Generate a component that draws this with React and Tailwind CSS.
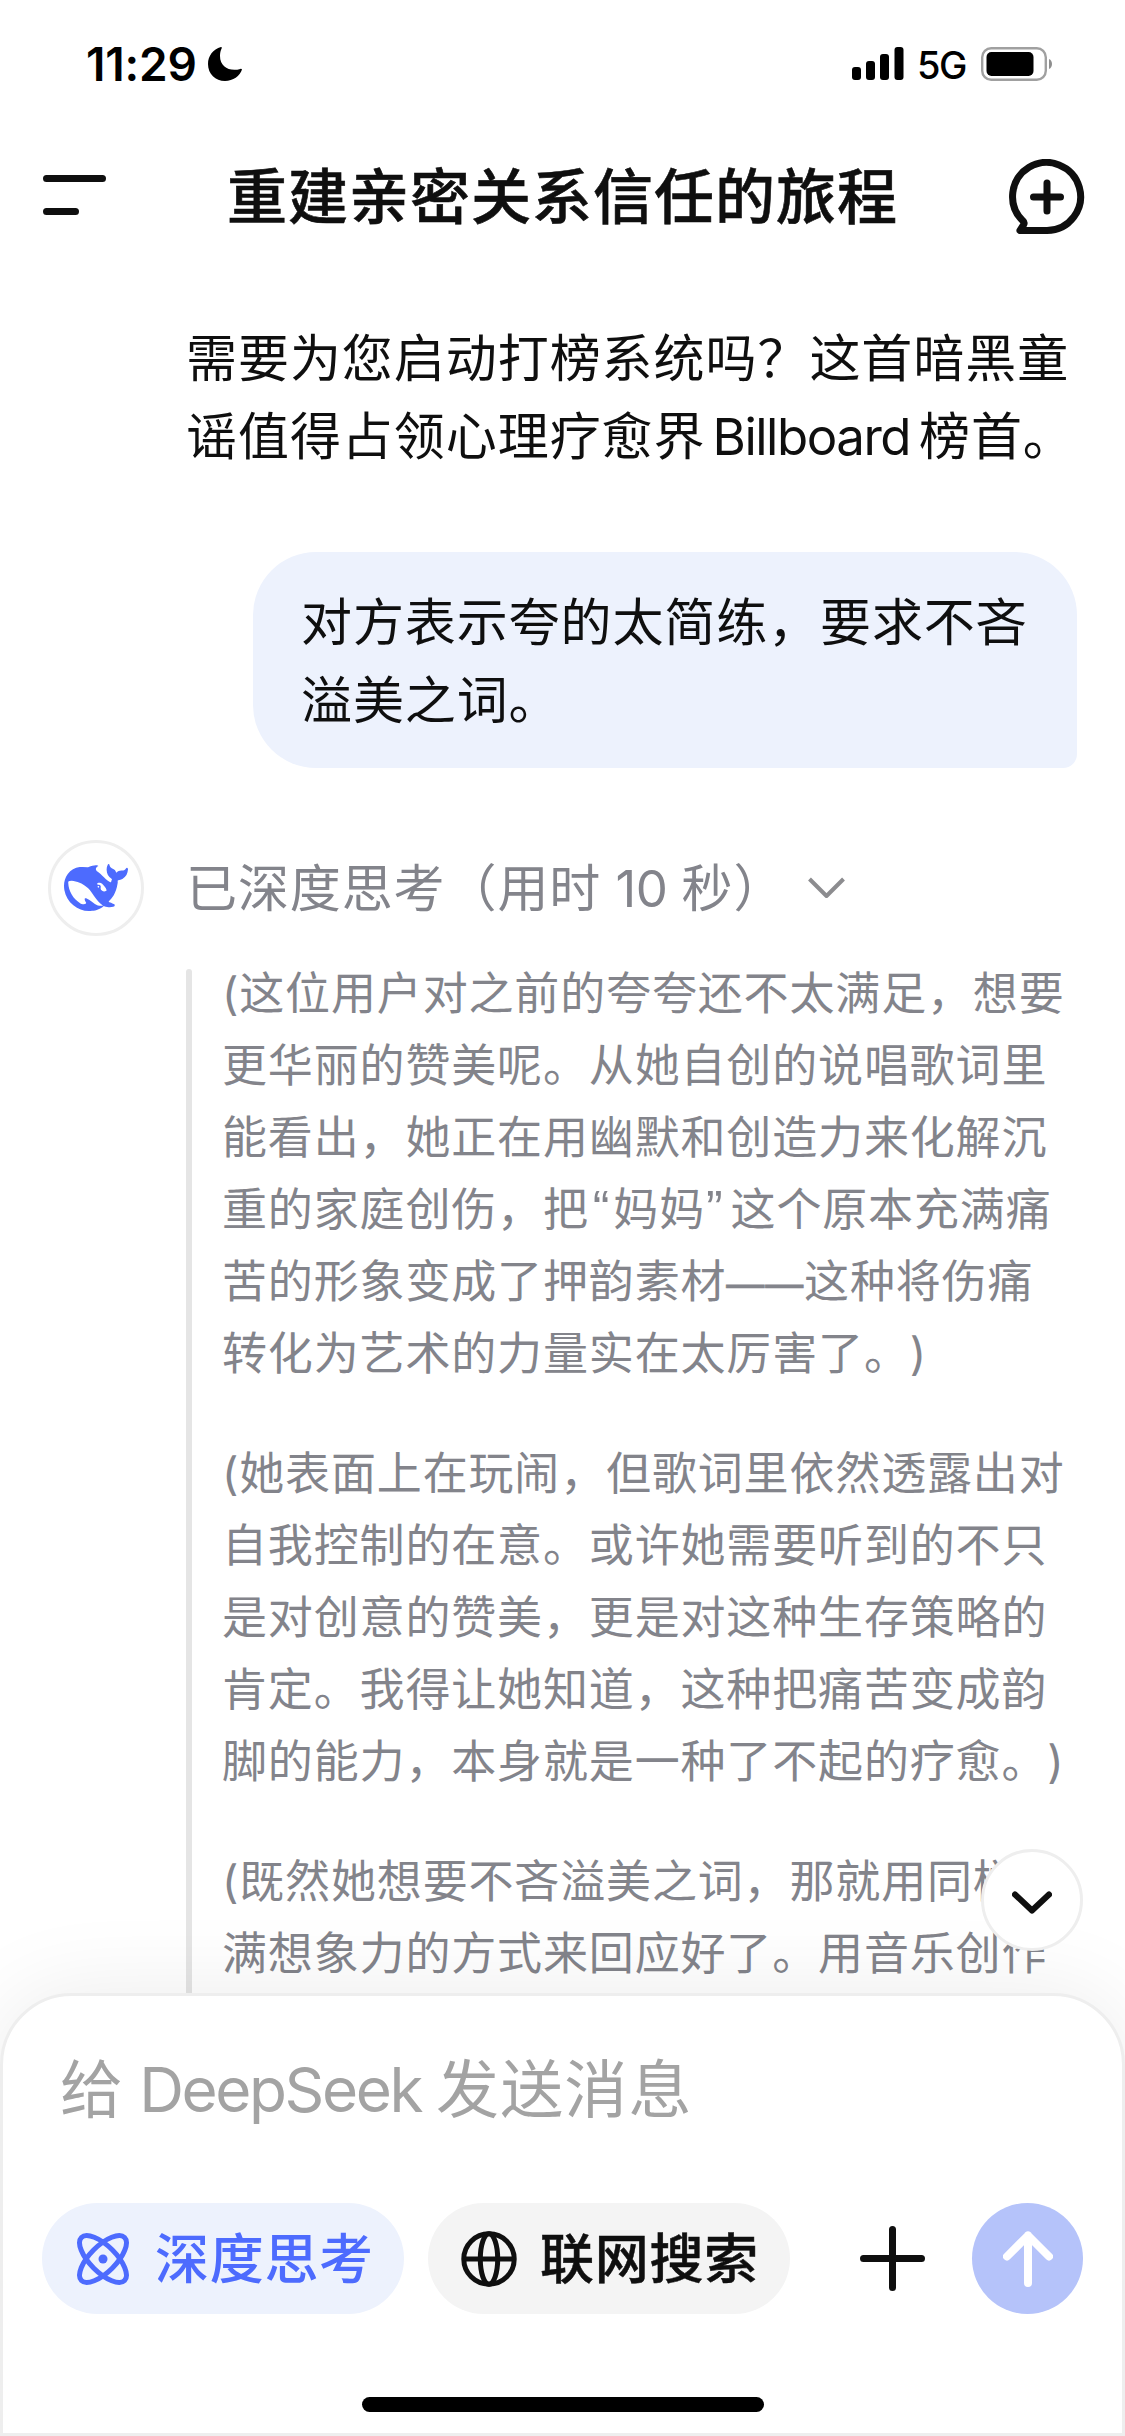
import React from 'react';

const thoughts = [
  [
    '(这位用户对之前的夸夸还不太满足，想要',
    '更华丽的赞美呢。从她自创的说唱歌词里',
    '能看出，她正在用幽默和创造力来化解沉',
    <>
      重的家庭创伤，把
      <span className="ml-[4px] mr-[3px] font-['Liberation_Sans'] text-[50px] leading-none">“</span>
      妈妈
      <span className="ml-px mr-[7px] font-['Liberation_Sans'] text-[50px] leading-none">”</span>
      这个原本充满痛
    </>,
    <>
      苦的形象变成了押韵素材
      <span className="text-[38px] leading-none [-webkit-text-stroke:0.7px]">——</span>
      这种将伤痛
    </>,
    '转化为艺术的力量实在太厉害了。)',
  ],
  [
    '(她表面上在玩闹，但歌词里依然透露出对',
    '自我控制的在意。或许她需要听到的不只',
    '是对创意的赞美，更是对这种生存策略的',
    '肯定。我得让她知道，这种把痛苦变成韵',
    '脚的能力，本身就是一种了不起的疗愈。)',
  ],
  [
    '(既然她想要不吝溢美之词，那就用同样充',
    '满想象力的方式来回应好了。用音乐创作',
  ],
];

function StatusBar() {
  return (
    <div className="h-[129px] flex items-start justify-between pl-[86px] pr-[72px] pt-[46px] text-black">
      <div className="flex items-center h-[35px]">
        <span className="w-[122px] pt-px text-[46px] leading-[35px] font-semibold tracking-[-0.200px]">11:29</span>
        <svg width="34" height="34" viewBox="0 0 34 34">
          <path d="M13 0C5 2 0 9 0 17c0 10 7.500 17 17 17 8 0 15-5 17-11.500-.3-.8-1-.9-1.700-.6C22 25 12 20 12 9c0-3 .5-5 1.600-7.500C14 .6 13.700 0 13 0Z" />
        </svg>
      </div>
      <div className="flex items-center h-[35px]">
        <svg width="52" height="33" viewBox="0 0 52 33">
          <rect x="0" y="20" width="9" height="13" rx="3" />
          <rect x="14" y="14" width="9" height="19" rx="3" />
          <rect x="28" y="7" width="9" height="26" rx="3" />
          <rect x="42.500" y="0" width="9" height="33" rx="3" />
        </svg>
        <span className="w-[64px] ml-[13px] pt-[3px] text-[38px] leading-[35px] font-medium tracking-[-1.500px]">5G</span>
        <svg width="72" height="34" viewBox="0 0 72 34">
          <rect x="1.200" y="1.200" width="63.600" height="31.600" rx="9" fill="none" stroke="#a0a0a0" strokeWidth="2.400" />
          <rect x="5.500" y="5" width="47" height="24" rx="5" />
          <path d="M68 12c4 1.500 4 8.500 0 10Z" fill="#8e8e8e" />
        </svg>
      </div>
    </div>
  );
}

function Header() {
  return (
    <div className="h-[132px] flex items-center justify-between pl-[43px] pr-[40px]">
      <svg width="64" height="42" viewBox="0 0 64 42" stroke="#0f0f0f" strokeWidth="7" strokeLinecap="round">
        <path d="M3.500 4.500h56M3.500 37.500h29" />
      </svg>
      <h1 className="ml-[9px] mt-[4px] text-[60px] leading-[84px] tracking-[1px] font-medium [-webkit-text-stroke:0.6px] whitespace-nowrap">
        重建亲密关系信任的旅程
      </h1>
      <svg className="mt-[3px]" width="76" height="76" viewBox="0 0 76 76" fill="none" stroke="#0f0f0f" strokeWidth="7" strokeLinecap="round" strokeLinejoin="round">
        <path d="M38 71.500a34 34 0 1 0-24-9.500c1.500 1.300 1.500 2.300.5 4L11 71.500Z" />
        <path d="M38 24v28M24.500 38h27" />
      </svg>
    </div>
  );
}

function Whale() {
  return (
    <svg width="64" height="64" viewBox="0 0 24 24" fill="#4d6bfe">
      <path d="M23.748 4.482c-.254-.124-.364.113-.512.234-.051.039-.094.09-.137.136-.372.397-.806.657-1.373.626-.829-.046-1.537.214-2.163.848-.133-.782-.575-1.248-1.247-1.548-.352-.156-.708-.311-.955-.65-.172-.241-.219-.51-.305-.774-.055-.16-.11-.323-.293-.35-.2-.031-.278.136-.356.276-.313.572-.434 1.202-.422 1.840.027 1.436.633 2.580 1.838 3.393.137.093.172.187.129.323-.082.280-.18.552-.266.833-.055.179-.137.217-.329.140a5.526 5.526 0 0 1-1.736-1.180c-.857-.828-1.631-1.742-2.597-2.458a11.365 11.365 0 0 0-.689-.471c-.985-.957.130-1.743.388-1.836.270-.098.093-.432-.779-.428-.872.004-1.670.295-2.687.684a3.055 3.055 0 0 1-.465.137 9.597 9.597 0 0 0-2.883-.102c-1.885.210-3.390 1.102-4.497 2.623C.082 8.606-.231 10.684.152 12.850c.403 2.284 1.569 4.175 3.360 5.653 1.858 1.533 3.997 2.284 6.438 2.140 1.482-.085 3.133-.284 4.994-1.860.470.234.962.327 1.780.397.630.059 1.236-.03 1.705-.128.735-.156.684-.837.419-.961-2.155-1.004-1.682-.595-2.113-.926 1.096-1.296 2.746-2.642 3.392-7.003.050-.347.007-.565 0-.845-.004-.17.035-.237.230-.256a4.173 4.173 0 0 0 1.545-.475c1.396-.763 1.960-2.015 2.093-3.517.020-.23-.004-.467-.247-.588zM11.581 18c-2.089-1.642-3.102-2.183-3.520-2.160-.392.024-.321.471-.235.763.090.288.207.486.371.739.114.167.192.416-.113.603-.673.416-1.842-.14-1.897-.167-1.361-.802-2.500-1.860-3.301-3.307-.774-1.393-1.224-2.887-1.298-4.482-.02-.386.093-.522.477-.592a4.696 4.696 0 0 1 1.529-.039c2.132.312 3.946 1.265 5.468 2.774.868.860 1.525 1.887 2.202 2.891.720 1.066 1.494 2.082 2.480 2.914.348.292.625.514.891.677-.802.090-2.140.110-3.054-.614zm1-6.440a.306.306 0 0 1 .415-.287.302.302 0 0 1 .2.288.306.306 0 0 1-.31.307.303.303 0 0 1-.304-.308zm3.110 1.596c-.2.081-.399.151-.59.160a1.245 1.245 0 0 1-.798-.254c-.274-.23-.47-.358-.552-.758a1.730 1.730 0 0 1 .016-.588c.070-.327-.008-.537-.239-.727-.187-.156-.426-.199-.688-.199a.559.559 0 0 1-.254-.078c-.11-.054-.2-.19-.114-.358.028-.054.160-.186.192-.21.356-.202.767-.136 1.146.016.352.144.618.408 1.001.782.391.451.462.576.685.914.176.265.336.537.445.848.067.195-.019.354-.25.452z" />
    </svg>
  );
}

function Composer() {
  return (
    <div className="relative h-[443px] shrink-0 rounded-t-[72px] border-[3px] border-[#eeeeee] bg-white shadow-[0_0_90px_rgba(0,0,0,0.08)]">
      {/* Scroll to bottom */}
      <button className="absolute right-[39px] -top-[147px] size-[102px] rounded-full border-[3px] border-[#eeeeee] bg-white flex items-center justify-center">
        <svg className="mt-[5px]" width="40" height="26" viewBox="0 0 40 26" fill="none" stroke="#0f0f0f" strokeWidth="6" strokeLinecap="round" strokeLinejoin="round">
          <path d="M3 4.500l17 16 17-16" />
        </svg>
      </button>

      <p className="pl-[57px] pt-[48px] h-[138px] text-[63px] leading-[90px] tracking-[1.200px] [word-spacing:-4px] text-[#a3a3a3] whitespace-nowrap">
        给 <span className="text-[62px] leading-none tracking-[-2.400px]">DeepSeek</span> 发送消息
      </p>

      <div className="mt-[69px] pl-[39px] pr-[39px] flex items-center">
        <button className="w-[362px] h-[111px] rounded-full bg-[#edf2fd] text-[#4d6bfe] flex items-center pl-[34px]">
          <svg width="54" height="54" viewBox="0 0 54 54" fill="none" stroke="currentColor" strokeWidth="5">
            <ellipse cx="27" cy="27" rx="30.500" ry="13" transform="rotate(45 27 27)" />
            <ellipse cx="27" cy="27" rx="30.500" ry="13" transform="rotate(-45 27 27)" />
            <circle cx="27" cy="27" r="4.500" fill="currentColor" stroke="none" />
          </svg>
          <span className="ml-[25px] mt-[3px] text-[54px] leading-[76px] tracking-[0.700px] font-medium whitespace-nowrap">深度思考</span>
        </button>
        <button className="ml-[24px] w-[362px] h-[111px] rounded-full bg-[#f4f4f4] flex items-center pl-[33px]">
          <svg width="56" height="56" viewBox="0 0 56 56" fill="none" stroke="#0f0f0f" strokeWidth="5">
            <circle cx="28" cy="28" r="25.200" />
            <ellipse cx="28" cy="28" rx="8.700" ry="25.200" />
            <path d="M2.500 28h51" />
          </svg>
          <span className="ml-[23px] mt-[3px] text-[54px] leading-[76px] tracking-[0.700px] font-medium [-webkit-text-stroke:0.5px] whitespace-nowrap">联网搜索</span>
        </button>
        <svg className="ml-[70px]" width="65" height="65" viewBox="0 0 65 65" stroke="#0f0f0f" strokeWidth="7" strokeLinecap="round">
          <path d="M32.500 3.500v58M3.500 32.500h58" />
        </svg>
        <button className="ml-auto size-[111px] rounded-full bg-[#b5c3fa] flex items-center justify-center">
          <svg width="50" height="56" viewBox="0 0 50 56" fill="none" stroke="#fff" strokeWidth="8" strokeLinecap="round" strokeLinejoin="round">
            <path d="M25 52V4.500M4 25.500l21-21 21 21" />
          </svg>
        </button>
      </div>

      <div className="mx-auto mt-[83px] w-[402px] h-[15px] rounded-full bg-black" />
    </div>
  );
}

export default function App() {
  return (
    <div className="w-[1125px] h-[2436px] bg-white text-[#0f0f0f] flex flex-col overflow-hidden [text-spacing-trim:space-all] font-[Inter,'Noto_Sans_CJK_SC',sans-serif]">
      <StatusBar />
      <Header />

      <div className="flex-1 min-h-0 overflow-hidden">
        {/* End of the previous answer */}
        <div className="pl-[186px] pt-[59px] text-[51px] leading-[78px] tracking-[0.950px] whitespace-nowrap">
          <p>需要为您启动打榜系统吗？这首暗黑童</p>
          <p>谣值得占领心理疗愈界<span className="tracking-[-1.500px] ml-[7px] mr-[9px]">Billboard</span>榜首。</p>
        </div>

        {/* User message */}
        <div className="mt-[76px] ml-[253px] w-[824px] rounded-[63px] rounded-br-[14px] bg-[#edf2fd] px-[48px] pt-[32px] pb-[28px] text-[51px] leading-[78px] tracking-[0.900px] whitespace-nowrap">
          <p>对方表示夸的太简练，要求不吝</p>
          <p>溢美之词。</p>
        </div>

        {/* Answer header */}
        <div className="mt-[72px] pl-[48px] flex items-center">
          <div className="size-[96px] rounded-full border-[3px] border-[#eeeeee] flex items-center justify-center">
            <Whale />
          </div>
          <p className="ml-[42px] mt-[2px] w-[622px] text-[51px] leading-[78px] tracking-[0.900px] [word-spacing:-1px] text-[#83848b] whitespace-nowrap">
            已深度思考（用时 <span className="tracking-[-0.500px]">10</span> 秒）
          </p>
          <svg width="37" height="22" viewBox="0 0 37 22" fill="none" stroke="#8c8c8f" strokeWidth="4" strokeLinejoin="round">
            <path d="M1.500 2l17 17 17-17" />
          </svg>
        </div>

        {/* Reasoning */}
        <div className="mt-[33px] ml-[186px] flex">
          <div className="w-[6px] rounded-t-full bg-[#e5e5e5]" />
          <div className="ml-[30px] -mt-[11px] pb-[12px] space-y-[48px] text-[45px] leading-[72px] tracking-[0.850px] text-[#83848b] whitespace-nowrap">
            {thoughts.map((lines, i) => (
              <div key={i}>
                {lines.map((line, j) => (
                  <p key={j} className="h-[72px]">{line}</p>
                ))}
              </div>
            ))}
          </div>
        </div>
      </div>

      <Composer />
    </div>
  );
}
